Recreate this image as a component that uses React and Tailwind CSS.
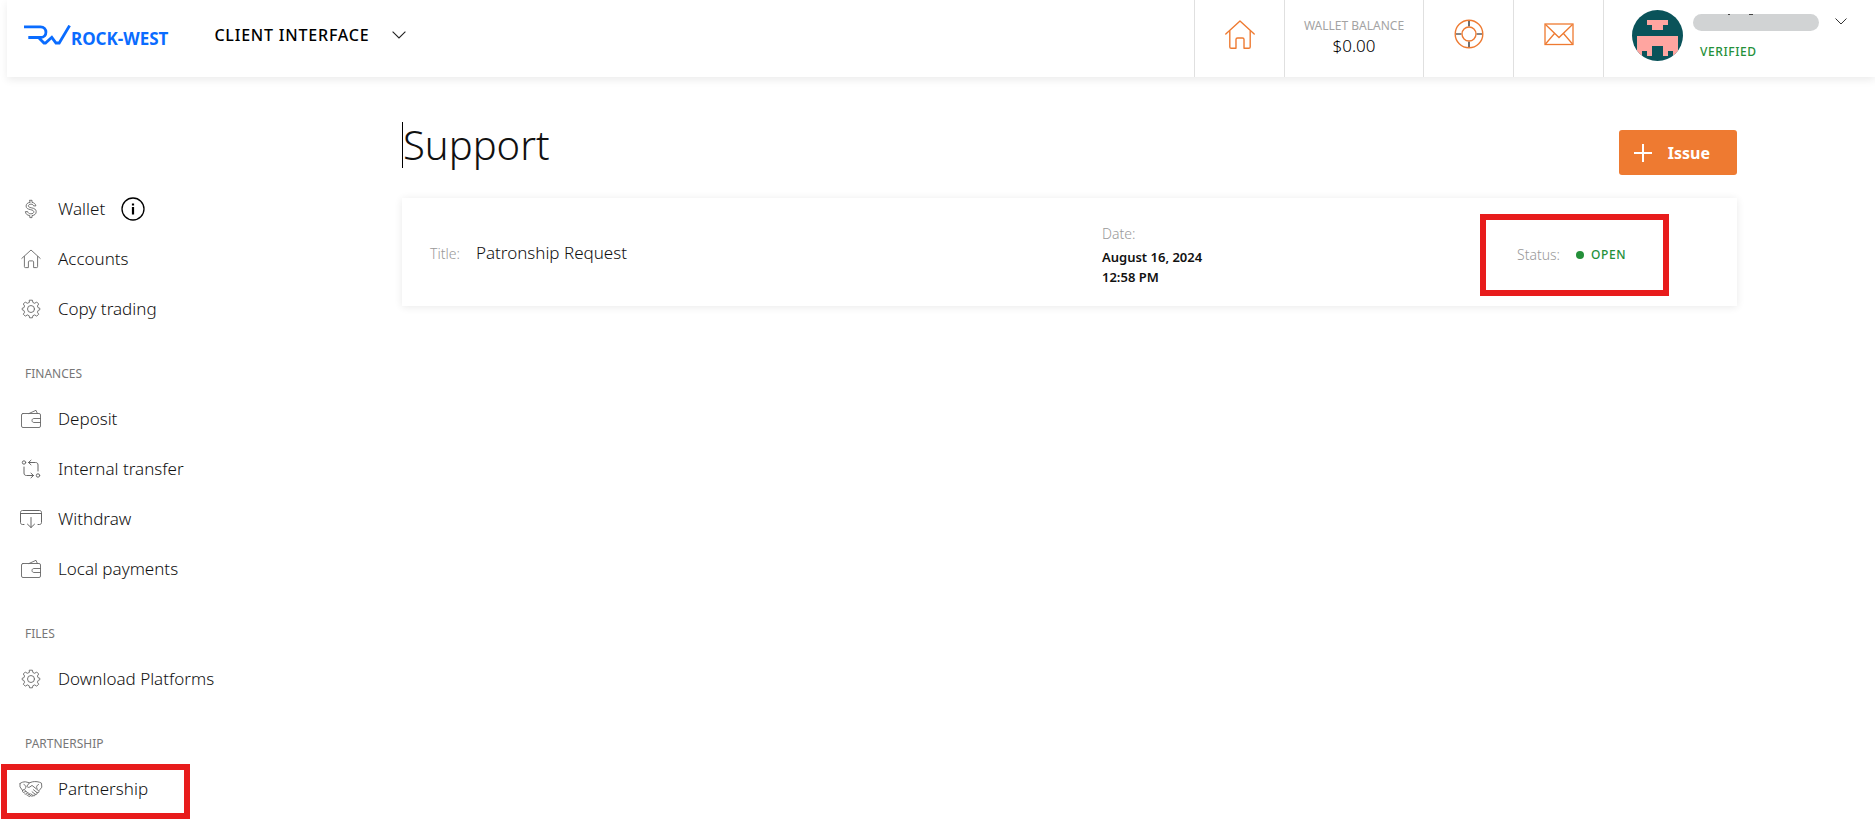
import React from 'react';

const line = { fill: 'none', stroke: 'currentColor', strokeLinecap: 'round', strokeLinejoin: 'round' };

function DollarIcon() {
  return (
    <svg width="22" height="22" viewBox="0 0 22 22" {...line} strokeWidth="0.9" aria-hidden="true">
      <path d="M9.8 2.3h2.2v2.1c2.2.3 3.6 1.6 3.9 3.5h-2.3c-.3-1.1-1.1-1.7-2.7-1.7-1.6 0-2.5.6-2.5 1.6 0 1.1.9 1.5 3 2 2.9.6 4.8 1.5 4.8 3.9 0 2.2-1.6 3.6-4.2 3.9v2h-2.2v-2c-2.7-.3-4.2-1.7-4.4-4h2.3c.3 1.4 1.3 2.2 3.1 2.2 1.9 0 3-.7 3-1.9 0-1.2-.9-1.7-3.1-2.2-2.9-.6-4.6-1.4-4.6-3.7 0-1.9 1.4-3.3 3.7-3.6z" />
    </svg>
  );
}

function HomeIcon({ size = 22, strokeWidth = 0.9 }) {
  return (
    <svg width={size} height={size} viewBox="0 0 22 22" {...line} strokeWidth={strokeWidth} aria-hidden="true">
      <path d="M1.8 10.4 11 2l9.2 8.4" />
      <path d="M4.4 8.5v10.2c0 .6.3.9.9.9h3.1v-5.7c0-.6.4-1 1-1h3.2c.6 0 1 .4 1 1v5.7h3.1c.6 0 .9-.3.9-.9V8.5" />
    </svg>
  );
}

function GearIcon() {
  return (
    <svg width="22" height="22" viewBox="0 0 22 22" {...line} strokeWidth="0.9" aria-hidden="true">
      <circle cx="11" cy="11" r="3.5" />
      <path d="M9.6 2.2h2.8l.5 2.3 1.8.8 2-1.3 2 2-1.3 2 .8 1.8 1.6.4v1.6l-1.6.6-.8 1.8 1.3 2-2 2-2-1.3-1.8.8-.5 2.1H9.6l-.5-2.1-1.8-.8-2 1.3-2-2 1.3-2-.8-1.8-1.6-.6v-1.6l1.6-.4.8-1.8-1.3-2 2-2 2 1.3 1.8-.8z" />
    </svg>
  );
}

function WalletIcon() {
  return (
    <svg width="22" height="22" viewBox="0 0 22 22" {...line} strokeWidth="0.9" aria-hidden="true">
      <rect x="1.5" y="5.5" width="19" height="14" rx="1.5" />
      <path d="M9 5.5 16 2.3l1.4 3.2" />
      <path d="M20.500 10.500h-6.500c-1.200 0-2 .8-2 2s.8 2 2 2h6.500" />
    </svg>
  );
}

function TransferIcon() {
  return (
    <svg width="22" height="22" viewBox="0 0 22 22" {...line} strokeWidth="1" aria-hidden="true">
      <circle cx="4" cy="4.5" r="1.7" />
      <circle cx="18" cy="17.5" r="1.7" />
      <path d="M18 13V7c0-1.700-.9-2.500-2.500-2.500H8.500M11 2.200 8.500 4.500 11 6.800" />
      <path d="M4 9v6c0 1.700.9 2.500 2.500 2.500h7M11 15.200l2.500 2.300-2.500 2.300" />
    </svg>
  );
}

function WithdrawIcon() {
  return (
    <svg width="22" height="22" viewBox="0 0 22 22" {...line} strokeWidth="1" aria-hidden="true">
      <path d="M4 16.500H2.500c-1.200 0-2-.8-2-2v-10c0-1.200.8-2 2-2h17c1.200 0 2 .8 2 2v10c0 1.200-.8 2-2 2H18" />
      <path d="M.5 5.500h21M11 9.500v10M7.500 16.200l3.500 3.300 3.500-3.300" />
    </svg>
  );
}

function HandshakeIcon() {
  return (
    <svg width="24" height="22" viewBox="0 0 24 22" {...line} strokeWidth="0.9" aria-hidden="true">
      <path d="M1 5.500c1.500-1.200 3.400-1.700 5.500-1.700l4 1 3-1c2.700-.5 6.400-.3 9 1.400l.3 4-2.600 3.300" />
      <path d="M1 5.500v3.400l2.600 3.600M10.500 4.800 7.800 8.200c.6 1.300 2 1.500 3.200.7l2-1.500 6.500 5.200c1.300 1.200-.1 2.700-1.500 2l-3.500-2.800" />
      <path d="m18 14.600c.9 1.200-.6 2.500-1.900 1.600l-3-2.400M16.100 16.200c.7 1.200-.8 2.200-2 1.400l-2.300-1.800M14.100 17.600c-.8 1.200-2.300.6-3.300-.5" />
      <path d="M3.600 12.500c.5-1.100 1.600-1.400 2.400-.5.700.8.300 1.400-.7 2.300-1 .7-2.300-.5-1.700-1.800zM6 13.800c1-1 2.400-.2 2.200 1-.3 1-1.600 1.900-2.500 1.200M8.200 15c1-.7 2.200.1 1.900 1.200-.3 1-1.500 1.600-2.300.9M10 16.300c.9-.2 1.600.6 1.300 1.500-.5.900-1.500 1.100-2 .3" />
      <path d="M5 6.500c2 .7 2.400 3 1 4.500M19.500 6.500c-2 .7-2.400 2.500-1.500 4" />
    </svg>
  );
}

function LifebuoyIcon() {
  return (
    <svg width="32" height="32" viewBox="0 0 32 32" fill="none" aria-hidden="true">
      <path d="M16 3v5.500M16 23.500V29M3 16h5.500M23.500 16H29" stroke="#111" strokeWidth="1.200" />
      <circle cx="16" cy="16" r="13.800" stroke="#ee7a31" strokeWidth="1.400" />
      <circle cx="16" cy="16" r="7" stroke="#ee7a31" strokeWidth="1.400" />
    </svg>
  );
}

function MailIcon() {
  return (
    <svg width="32" height="32" viewBox="0 0 32 32" fill="none" stroke="#ee7a31" strokeWidth="1.300" aria-hidden="true">
      <rect x="2" y="6" width="28" height="20.500" />
      <path d="m2.500 6.500 13.500 13 13.500-13M2.500 26l9-10.500M29.500 26l-9-10.500" />
    </svg>
  );
}

function Chevron({ className }) {
  return (
    <svg className={className} viewBox="0 0 14 8" fill="none" stroke="#222" strokeWidth="1.100" aria-hidden="true">
      <path d="m.6.6 6.400 6.400L13.400.6" />
    </svg>
  );
}

function Avatar() {
  return (
    <svg className="size-[51px] rounded-full" viewBox="0 0 10 10" shapeRendering="crispEdges" aria-hidden="true">
      <rect width="10" height="10" fill="#0a535a" />
      <path fill="#ffa5a0" d="M3 2h4v1H6v1H4V3H3zM1 5h8v4H8V8H7v1H6V7H4v2H3V8H2v1H1z" />
    </svg>
  );
}

function Logo() {
  return (
    <a href="#" className="flex items-center text-[#0a6cff]">
      <svg width="47" height="20" viewBox="0 0 47 20" fill="none" stroke="currentColor" strokeWidth="2.800" aria-hidden="true">
        <path d="M0 1.800h16.500c7 0 7.500 10.700 0 10.700H4.300" />
        <path d="M14.500 12.500 20 18h1.500l6.300-5.700L32 18h3.200L45.600.6" />
      </svg>
      <span className="pt-2 text-[17px] leading-5 font-bold">ROCK-WEST</span>
    </a>
  );
}

const groups = [
  {
    items: [
      { label: 'Wallet', icon: DollarIcon, info: true },
      { label: 'Accounts', icon: HomeIcon },
      { label: 'Copy trading', icon: GearIcon },
    ],
  },
  {
    title: 'Finances',
    items: [
      { label: 'Deposit', icon: WalletIcon },
      { label: 'Internal transfer', icon: TransferIcon },
      { label: 'Withdraw', icon: WithdrawIcon },
      { label: 'Local payments', icon: WalletIcon },
    ],
  },
  { title: 'Files', items: [{ label: 'Download Platforms', icon: GearIcon }] },
  { title: 'Partnership', items: [{ label: 'Partnership', icon: HandshakeIcon, marked: true }] },
];

function Header() {
  return (
    <header className="ml-[7px] flex h-[77px] justify-between bg-white pl-[17px] shadow-[0_3px_8px_rgba(0,0,0,0.08)]">
      <div className="flex h-[70px] items-center gap-[46px]">
        <Logo />
        <button className="flex items-center gap-[22px] text-base font-medium tracking-wider text-black">
          CLIENT INTERFACE
          <Chevron className="w-[14px]" />
        </button>
      </div>
      <div className="flex text-[#ee7a31]">
        <a href="#" aria-label="Home" className="flex w-[90px] justify-center border-l border-[#e0e0e0] pt-[18px]">
          <HomeIcon size={34} strokeWidth={0.9} />
        </a>
        <div className="w-[139px] border-l border-[#e0e0e0] pt-4 text-center">
          <div className="text-xs leading-5 text-[#a3a3a3]">WALLET BALANCE</div>
          <div className="text-[17px] leading-5 font-light text-black">$0.00</div>
        </div>
        <a href="#" aria-label="Support" className="flex w-[90px] justify-center border-l border-[#e0e0e0] pt-[18px]">
          <LifebuoyIcon />
        </a>
        <a href="#" aria-label="Messages" className="flex w-[90px] justify-center border-l border-[#e0e0e0] pt-[18px]">
          <MailIcon />
        </a>
        <button aria-label="Account" className="flex w-[272px] items-start gap-[10px] border-l border-[#e0e0e0] pt-[10px] pl-7">
          <Avatar />
          <span className="flex flex-col items-start gap-[13px] pt-1">
            <svg width="126" height="17" viewBox="0 0 126 17" aria-hidden="true">
              <rect width="126" height="17" rx="8.500" fill="#d1d3d4" />
              <path d="M35 .5h2M56 .5h4" stroke="#444" />
            </svg>
            <span className="pl-[7px] text-xs font-medium tracking-wider text-[#24903a]">VERIFIED</span>
          </span>
          <Chevron className="mt-2 ml-[6px] w-3" />
        </button>
      </div>
    </header>
  );
}

function Sidebar() {
  return (
    <nav className="w-[402px] shrink-0 pt-[107px] text-[#111]">
      {groups.map((group, i) => (
        <section key={i}>
          {group.title && (
            <h2 className="mt-[30px] mb-[10px] pl-[25px] text-xs leading-5 text-[#777] uppercase">{group.title}</h2>
          )}
          <ul>
            {group.items.map(({ label, icon: Icon, info, marked }) => (
              <li key={label} className="relative flex h-[50px] items-center pl-[17px]">
                <a href="#" className="flex items-center gap-[13px] text-[17px] font-light">
                  <span className="flex w-7 justify-center text-[#666]"><Icon /></span>
                  {label}
                </a>
                {info && (
                  <button aria-label="Wallet info" className="ml-4 text-black">
                    <svg width="24" height="24" viewBox="0 0 24 24" fill="none" stroke="currentColor" aria-hidden="true">
                      <circle cx="12" cy="12" r="11" strokeWidth="1.300" />
                      <path d="M12 10v7.500M12 6.500v2" strokeWidth="2.200" />
                    </svg>
                  </button>
                )}
                {marked && <span className="pointer-events-none absolute top-0 left-px h-[55px] w-[189px] border-6 border-[#e81c1c]" />}
              </li>
            ))}
          </ul>
        </section>
      ))}
    </nav>
  );
}

function Ticket() {
  return (
    <article className="grid grid-cols-[1fr_378px_189px] items-center bg-white pt-4 pr-[68px] pb-[10px] pl-7 shadow-[0_1px_8px_rgba(0,0,0,0.09)]">
      <div className="flex items-baseline gap-4 pb-1">
        <span className="text-sm font-light text-[#999]">Title:</span>
        <span className="text-[17px] font-light">Patronship Request</span>
      </div>
      <div className="text-[13px] leading-5">
        <div className="mb-[3px] text-sm leading-5 font-light text-[#999]">Date:</div>
        <div className="font-semibold">August 16, 2024</div>
        <div className="font-semibold">12:58 PM</div>
      </div>
      <div className="flex h-[82px] items-center border-6 border-[#e81c1c] pl-[31px]">
        <span className="text-sm font-light text-[#999]">Status:</span>
        <span className="ml-4 size-2 rounded-full bg-[#24903a]" />
        <span className="ml-[7px] text-xs font-medium tracking-wider text-[#24903a]">OPEN</span>
      </div>
    </article>
  );
}

export default function App() {
  return (
    <div className="min-h-screen overflow-x-hidden bg-white font-['Noto_Sans','Open_Sans',sans-serif] text-[#111]">
      <Header />
      <div className="flex">
        <Sidebar />
        <main className="flex-1 pt-[45px] pr-[138px]">
          <div className="mb-[23px] flex items-start justify-between">
            <h1 className="border-l border-black text-[40px] leading-[46px] font-light">Support</h1>
            <button className="mt-2 flex h-[45px] items-center gap-4 rounded-[3px] bg-[#ee7a31] pr-[27px] pl-[15px] text-base font-bold text-white">
              <svg width="18" height="18" viewBox="0 0 18 18" stroke="currentColor" strokeWidth="2" aria-hidden="true">
                <path d="M9 0v18M0 9h18" />
              </svg>
              Issue
            </button>
          </div>
          <Ticket />
        </main>
      </div>
    </div>
  );
}
